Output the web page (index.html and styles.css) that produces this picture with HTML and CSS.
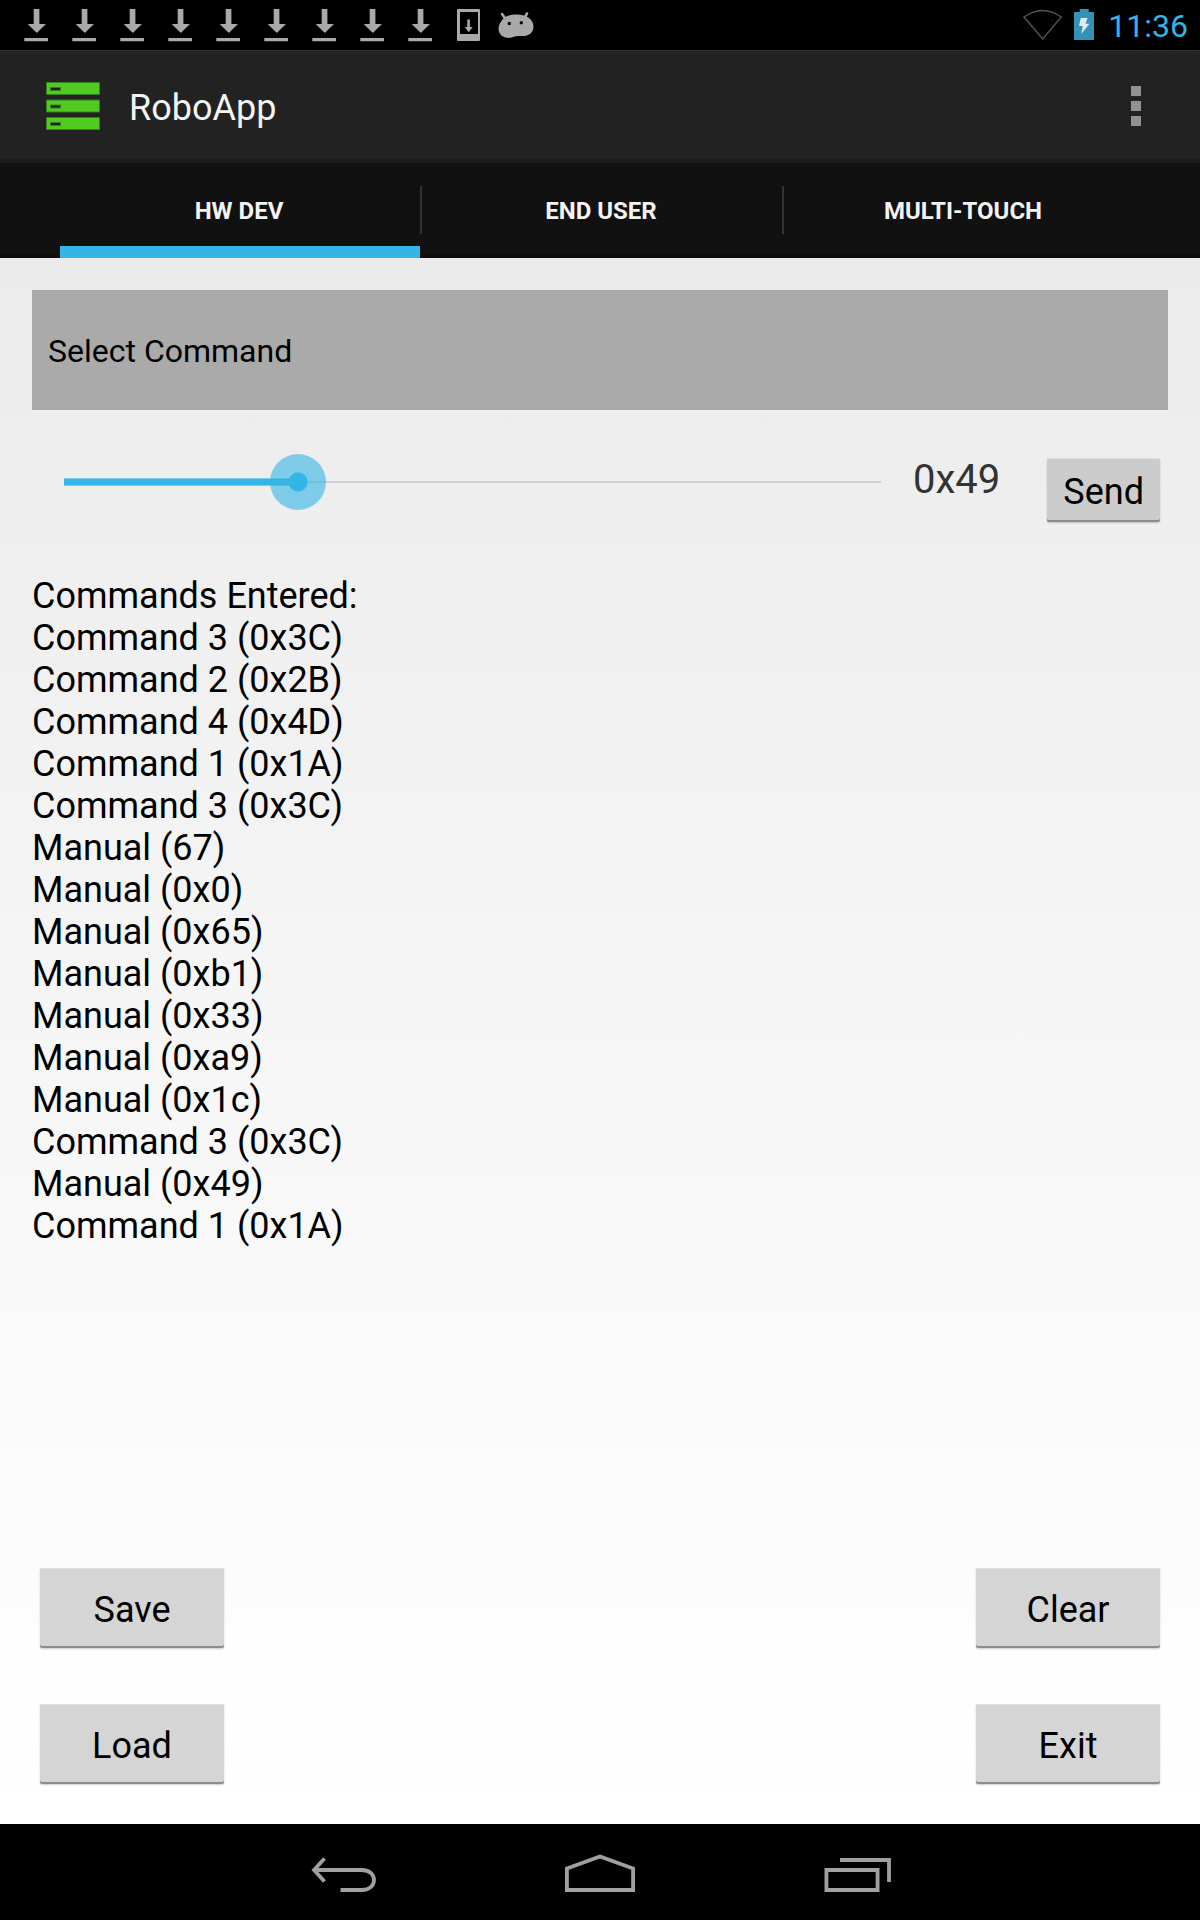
FILE: index.html
```html
<!DOCTYPE html>
<html lang="en">
<head>
<meta charset="utf-8">
<meta name="viewport" content="width=device-width, initial-scale=1">
<title>RoboApp</title>
<link rel="stylesheet" href="styles.css">
</head>
<body>
<svg class="sprite" aria-hidden="true">
  <symbol id="download" viewBox="0 0 48 50"><path fill="#a9a9a9" d="M21.7 9h5.7v15H34l-9.200 9-9.100-9h6zM12.300 38H36v3.200H12.300z"/></symbol>
</svg>
<div class="screen">
  <header class="status">
    <div class="notifications" aria-label="Notifications">
      <svg class="note"><use href="#download"/></svg>
      <svg class="note"><use href="#download"/></svg>
      <svg class="note"><use href="#download"/></svg>
      <svg class="note"><use href="#download"/></svg>
      <svg class="note"><use href="#download"/></svg>
      <svg class="note"><use href="#download"/></svg>
      <svg class="note"><use href="#download"/></svg>
      <svg class="note"><use href="#download"/></svg>
      <svg class="note"><use href="#download"/></svg>
      <svg class="note" viewBox="0 0 48 50"><path fill="#a9a9a9" fill-rule="evenodd" d="M14 9h21q1 0 1 1v30q0 1-1 1H14q-1 0-1-1V10q0-1 1-1zm2 3v22h18V12z"/><path fill="#a9a9a9" d="M23.300 19.500h2.600V27h2.800l-4 5.200-4-5.200h2.600z"/></svg>
      <svg class="note" viewBox="0 0 48 50"><path fill="#a9a9a9" d="M9.500 21C11 18.500 13 17 15.500 16c5-2 12-2 17-.3 5 1.500 9 5.800 9 10.800 0 5.500-4 9-9 9.500-4 .4-7-.7-10 .6-2 .9-4.500 1.500-7.500 1.200-5-.5-8.500-4.500-8.400-9 0-3 1-5.500 2.900-7.800z"/><path d="M10 14l3.500 5M35 13.500L32.500 18" stroke="#a9a9a9" stroke-width="2.600" stroke-linecap="round"/><circle cx="17.300" cy="23.500" r="1.700"/><circle cx="29.300" cy="22.700" r="1.700"/></svg>
    </div>
    <div class="system">
      <svg width="40" height="50" viewBox="0 0 40 50" aria-label="Wi-Fi"><path fill="none" stroke="#555" stroke-width="1.400" d="M1 17Q19.500 4 38.300 17L19.700 39z"/></svg>
      <svg width="20" height="50" viewBox="0 0 20 50" aria-label="Charging"><path fill="#3592b7" d="M5.700 9h9v3H20v28H0V12h5.700z"/><path fill="#dbebf1" d="M6.700 18h6.800l-2 5.700h4L7.200 34l1.600-8H5z"/></svg>
      <time class="clock">11:36</time>
    </div>
  </header>

  <div class="appbar">
    <svg class="logo" viewBox="0 0 54 48" aria-hidden="true"><g fill="#51cb21" stroke="#33801c"><path d="M.5.5h53v12H.5zM.5 18h53v12H.5zM.5 35.500h53v12H.5z"/></g><path fill="#222" stroke="#33801c" d="M4.500 5.500h10v3h-10zM4.500 23h10v3h-10zM4.500 40.500h10v3h-10z"/></svg>
    <h1 class="title">RoboApp</h1>
    <button class="more" type="button" aria-label="More options"><svg width="10" height="40" viewBox="0 0 10 40"><path fill="#929292" d="M0 0h10v10H0zM0 15h10v10H0zM0 30h10v10H0z"/></svg></button>
  </div>

  <nav class="tabs">
    <button class="tab tab-active" type="button">HW DEV</button>
    <button class="tab" type="button">END USER</button>
    <button class="tab" type="button">MULTI-TOUCH</button>
  </nav>

  <main class="content">
    <select class="command" aria-label="Select Command">
      <option>Select Command</option>
      <option>Command 1</option>
      <option>Command 2</option>
      <option>Command 3</option>
      <option>Command 4</option>
    </select>

    <div class="manual">
      <input class="slider" id="value" type="range" min="0" max="255" value="73" aria-label="Manual value" style="--level: 0.286">
      <output class="value" for="value">0x49</output>
      <button class="button send" type="button">Send</button>
    </div>

    <section class="log">
      <h2 class="log-title">Commands Entered:</h2>
      <ol class="log-list">
        <li>Command 3 (0x3C)</li>
        <li>Command 2 (0x2B)</li>
        <li>Command 4 (0x4D)</li>
        <li>Command 1 (0x1A)</li>
        <li>Command 3 (0x3C)</li>
        <li>Manual (67)</li>
        <li>Manual (0x0)</li>
        <li>Manual (0x65)</li>
        <li>Manual (0xb1)</li>
        <li>Manual (0x33)</li>
        <li>Manual (0xa9)</li>
        <li>Manual (0x1c)</li>
        <li>Command 3 (0x3C)</li>
        <li>Manual (0x49)</li>
        <li>Command 1 (0x1A)</li>
      </ol>
    </section>

    <div class="actions">
      <button class="button" type="button">Save</button>
      <button class="button" type="button">Clear</button>
      <button class="button" type="button">Load</button>
      <button class="button" type="button">Exit</button>
    </div>
  </main>

  <footer class="navbar">
    <button class="key" type="button" aria-label="Back"><svg width="72" height="48" viewBox="0 0 72 48"><g fill="none" stroke="#a0a0a0" stroke-width="3.800"><path d="M10 22h48c16 0 16 20 0 20H36.500"/><path d="M20.500 10.500L10 22l10.500 11.500"/></g></svg></button>
    <button class="key" type="button" aria-label="Home"><svg width="72" height="48" viewBox="0 0 72 48"><path fill="none" stroke="#a0a0a0" stroke-width="3.800" d="M2.900 20.500L36 8.500l33.100 12V42H2.900z"/></svg></button>
    <button class="key" type="button" aria-label="Recent apps"><svg width="72" height="48" viewBox="0 0 72 48"><path fill="none" stroke="#a0a0a0" stroke-width="3.800" d="M2.400 22h51.200v20H2.400zM16 12h49v22"/></svg></button>
  </footer>
</div>
</body>
</html>
```
FILE: styles.css
```css
* {
  box-sizing: border-box;
}

body {
  margin: 0;
  font-family: Roboto, "Noto Sans", sans-serif;
  color: #000;
}

button,
select,
input {
  margin: 0;
  padding: 0;
  border: 0;
  border-radius: 0;
  background: none;
  font: inherit;
  color: inherit;
}

svg {
  display: block;
}

.sprite {
  display: none;
}

.screen {
  display: flex;
  flex-direction: column;
  min-height: 100vh;
}

/* Status bar */
.status {
  display: flex;
  justify-content: space-between;
  height: 50px;
  padding: 0 12px;
  background: #000;
}

.notifications {
  display: flex;
}

.note {
  width: 48px;
  height: 50px;
}

.system {
  display: flex;
  align-items: center;
  gap: 11px;
}

.clock {
  margin-left: 3px;
  padding-top: 2px;
  font-size: 32px;
  line-height: 48px;
  color: #33b5e5;
}

/* App bar */
.appbar {
  display: flex;
  align-items: center;
  height: 113px;
  padding: 2px 48px 0 46px;
  border-top: 1px solid #333;
  border-bottom: 4px solid #1b1b1b;
  background: #222;
}

.logo {
  width: 54px;
  height: 48px;
}

.title {
  flex: 1;
  margin: 0 0 0 29px;
  padding-top: 4px;
  font-size: 36px;
  font-weight: 400;
  line-height: 44px;
  color: #f3f3f3;
}

.more {
  padding: 8px 11px;
}

/* Tabs */
.tabs {
  display: flex;
  gap: 2px;
  height: 95px;
  padding: 0 56px 0 60px;
  background: #111;
  box-shadow: inset 0 -3px #0c0c0c;
}

.tab {
  position: relative;
  flex: 1;
  padding-right: 2px;
  font-size: 24px;
  font-weight: 700;
  color: #f3f3f3;
}

.tab + .tab::before {
  content: "";
  position: absolute;
  top: 23px;
  left: -2px;
  width: 2px;
  height: 48px;
  background: #333;
}

.tab-active {
  box-shadow: inset 0 -12px #33b5e5;
}

/* Content */
.content {
  display: flex;
  flex: 1;
  flex-direction: column;
  padding: 32px 32px 40px;
  background: linear-gradient(#ebebeb, #eee 14%, #f6f6f6 50%, #fcfcfc 80%, #fff);
}

.command {
  appearance: none;
  width: 100%;
  height: 120px;
  padding: 2px 16px 0;
  background: #aaa;
  font-size: 32px;
}

.manual {
  display: flex;
  align-items: flex-start;
  padding: 44px 8px 53px 4px;
}

.slider {
  appearance: none;
  flex: 1;
  min-width: 0;
  height: 56px;
  background:
    linear-gradient(#7dcbea 1px, #33b5e5 1px 7px, #7dcbea 7px) 28px 50% / calc((100% - 56px) * var(--level)) 8px no-repeat,
    linear-gradient(#d0d0d0, #d0d0d0) 50% 50% / calc(100% - 56px) 2px no-repeat;
}

.slider::-webkit-slider-thumb {
  appearance: none;
  width: 56px;
  height: 56px;
  border-radius: 50%;
  background: radial-gradient(circle, #33b5e5 9px, rgba(51, 181, 229, 0.6) 10px);
}

.value {
  margin: 0 47px 0 4px;
  padding-top: 2px;
  font-size: 40px;
  line-height: 48px;
  color: #333;
}

.button {
  height: 80px;
  padding-top: 4px;
  border-radius: 2px;
  background: #d5d5d5;
  box-shadow: inset 0 -2px #8c8c8c, inset 0 1px #dedede, 0 1px 2px rgba(0, 0, 0, 0.2);
  font-size: 36px;
}

.send {
  height: 64px;
  margin-top: 4px;
  padding: 4px 16px 0;
  background: #ccc;
}

.log {
  font-size: 36px;
  line-height: 42px;
}

.log-title {
  margin: 0;
  font: inherit;
}

.log-list {
  margin: 0;
  padding: 0;
  list-style: none;
}

.actions {
  display: grid;
  grid-template-columns: 184px 184px;
  justify-content: space-between;
  gap: 56px 16px;
  margin-top: auto;
  padding: 32px 8px 0;
}

/* System navigation */
.navbar {
  display: flex;
  justify-content: center;
  gap: 188px;
  height: 96px;
  background: #000;
}

.key {
  display: flex;
  align-items: center;
}
```
